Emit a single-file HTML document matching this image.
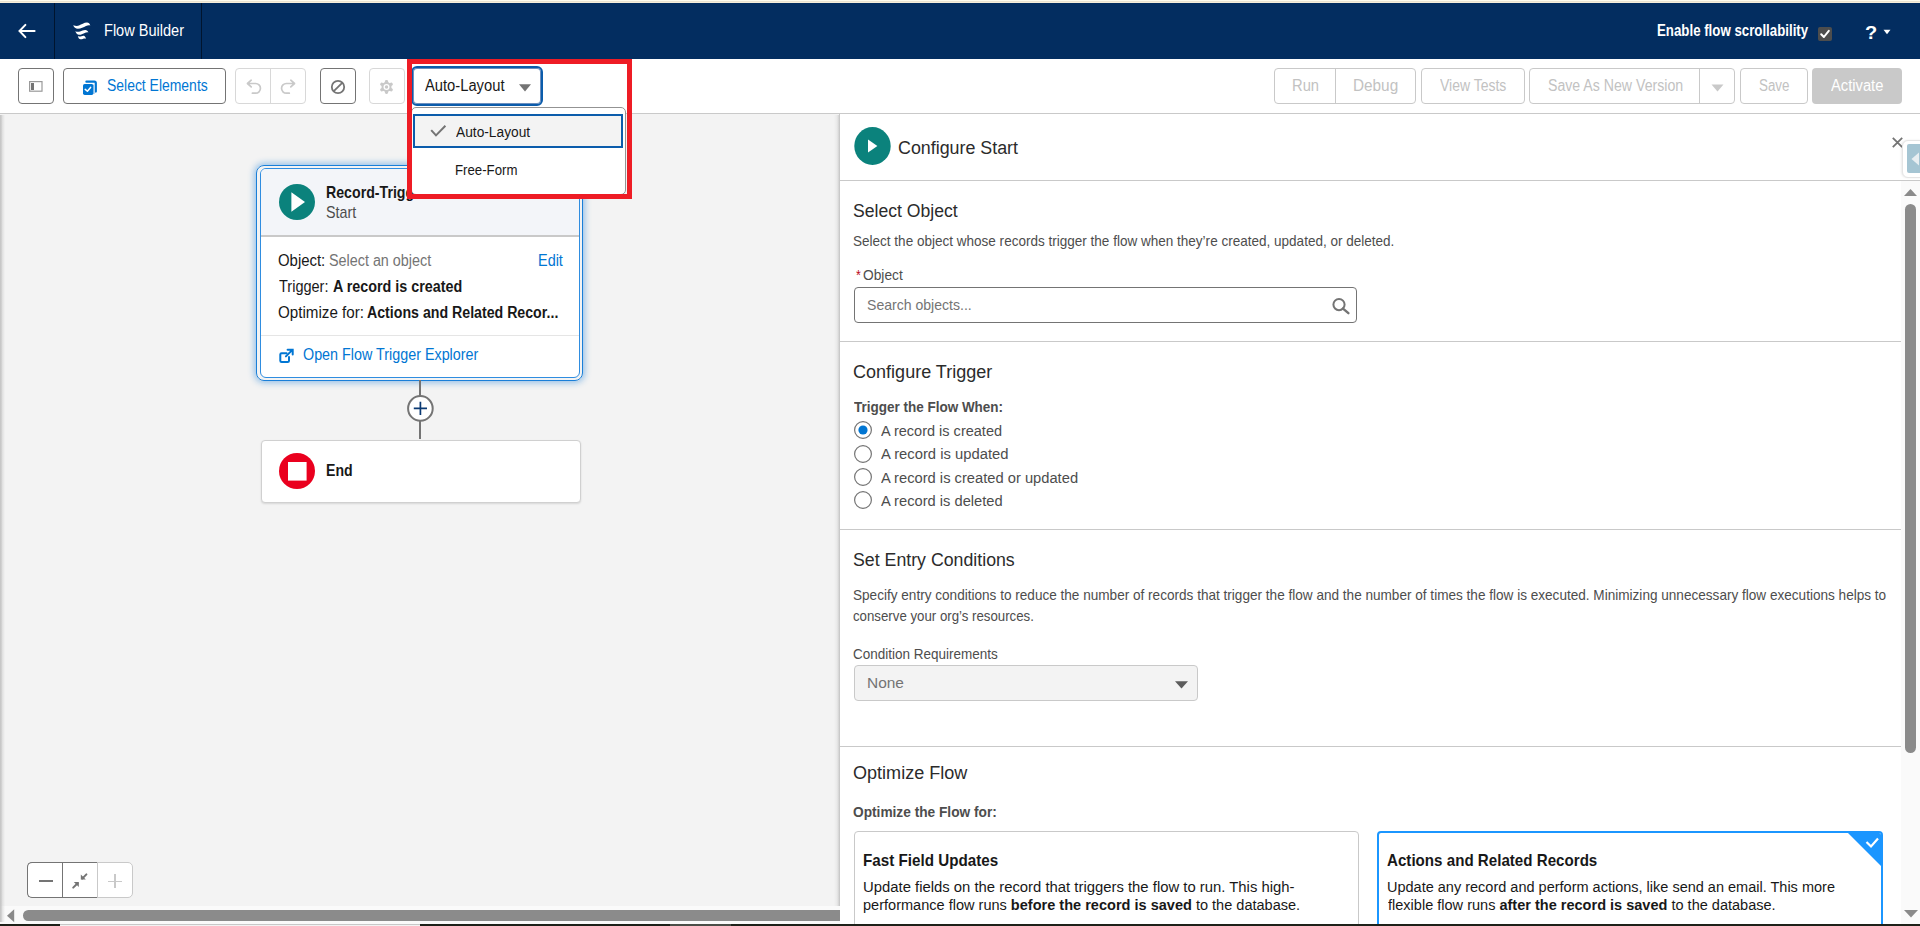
<!DOCTYPE html>
<html><head><meta charset="utf-8">
<style>
*{box-sizing:border-box;margin:0;padding:0}
html,body{width:1920px;height:926px;overflow:hidden;background:#fff;font-family:"Liberation Sans",sans-serif;color:#181818}
.a{position:absolute}
.t{position:absolute;white-space:nowrap;line-height:1;transform-origin:0 0}
.b{font-weight:bold}
svg{position:absolute;overflow:visible}
</style></head><body>

<!-- top strip -->
<div class="a" style="left:0;top:0;width:1920px;height:1px;background:#fefbee"></div><div class="a" style="left:0;top:1px;width:1920px;height:1px;background:#ebe3d1"></div><div class="a" style="left:0;top:2px;width:1920px;height:1px;background:#f7eedb"></div>
<!-- header -->
<div class="a" style="left:0;top:3px;width:1920px;height:56px;background:#032d60"></div>
<div class="a" style="left:54px;top:3px;width:1px;height:56px;background:#00142e"></div>
<div class="a" style="left:201px;top:3px;width:1px;height:56px;background:#00142e"></div>
<svg style="left:18px;top:23px" width="18" height="16" viewBox="0 0 18 16"><path d="M7.4 1.9 L1.5 8 L7.4 14.1 M1.5 8 H16.6" fill="none" stroke="#fff" stroke-width="2" stroke-linecap="round" stroke-linejoin="miter"/></svg>
<svg style="left:70px;top:19px" width="24" height="24" viewBox="0 0 24 24"><g fill="#fff"><path d="M3.2 6.2 C5 6.8 7 7.4 9 6.6 C11.5 5.6 14 3.6 17 3.6 C18.6 3.6 19.8 4.8 20.3 6.4 C18.8 6 17.5 6.3 16 7 C13.5 8.2 11 9.8 7.8 9.8 C5.6 9.8 4 8.2 3.2 6.2Z"/><path d="M5.3 12.2 C6.8 12.8 8.5 13 10 12.4 C12 11.6 13.6 10.8 15.4 10.9 C16.8 11 17.8 12 18.5 13.4 C17.2 13.2 15.8 13.4 14.2 14.2 C12.4 15.1 10.8 15.9 9 15.7 C7.3 15.5 6 14.2 5.3 12.2Z"/><path d="M7.9 16.9 C9 17.5 10.2 17.7 11.4 17.3 C12.5 16.9 13.4 16.6 14.4 17 C15.1 17.4 15.6 18.4 16 19.8 C15 19.4 14 19.5 12.8 19.9 C11.7 20.3 10.6 20.5 9.8 20.1 C8.8 19.6 8.2 18.4 7.9 16.9Z"/></g></svg>
<div class="t" style="left:104.04px;top:23.00px;font-size:16.00px;color:#fff;transform:scaleX(0.9089);">Flow Builder</div>
<div class="t" style="left:1656.74px;top:23.00px;font-size:16.00px;color:#fff;transform:scaleX(0.8293);"><b>Enable flow scrollability</b></div>
<div class="a" style="left:1818px;top:27px;width:14px;height:14px;background:#4d4d4d;border-radius:2px"></div>
<svg style="left:1818px;top:27px" width="14" height="14" viewBox="0 0 14 14"><path d="M3.2 7.2 L5.9 10 L10.8 3.8" fill="none" stroke="#fff" stroke-width="2" stroke-linecap="round" stroke-linejoin="round"/></svg>
<div class="t" style="left:1864.90px;top:24.00px;font-size:18.50px;color:#fff;transform:scaleX(1.0811);"><b>?</b></div>
<svg style="left:1883px;top:29px" width="8" height="6" viewBox="0 0 8 6"><path d="M0.5 0.8 H7.5 L4 5.2Z" fill="#fff"/></svg>

<!-- toolbar -->
<div class="a" style="left:0;top:59px;width:1920px;height:55px;background:#fff;border-bottom:1px solid #c9c9c9"></div>
<!-- panel toggle -->
<div class="a" style="left:18px;top:68px;width:36px;height:36px;border:1px solid #747474;border-radius:4px"></div>
<svg style="left:29px;top:81px" width="14" height="11" viewBox="0 0 14 11"><rect x="0.6" y="0.6" width="12.4" height="9.6" fill="none" stroke="#9a9a9a" stroke-width="1.2"/><rect x="2" y="2" width="3" height="7" fill="#747474"/></svg>
<!-- select elements -->
<div class="a" style="left:63px;top:68px;width:163px;height:36px;border:1px solid #747474;border-radius:4px"></div>
<svg style="left:80px;top:77px" width="20" height="20" viewBox="0 0 20 20"><path d="M6.4 4.7 H14.4 Q15.8 4.7 15.8 6.1 V14.6" fill="none" stroke="#0176d3" stroke-width="2.2" stroke-linecap="round"/><rect x="13.4" y="7.3" width="1.5" height="9.6" fill="#b5d3ef"/><rect x="3" y="6.9" width="10.4" height="11" rx="1.7" fill="#0176d3"/><path d="M5.2 12.4 L7.4 14.3 L10.6 10.4" fill="none" stroke="#fff" stroke-width="1.5" stroke-linecap="round" stroke-linejoin="round"/></svg>
<div class="t" style="left:106.97px;top:78.00px;font-size:16.00px;color:#0176d3;transform:scaleX(0.8712);">Select Elements</div>
<!-- undo/redo -->
<div class="a" style="left:235px;top:68px;width:71px;height:36px;border:1px solid #d8d8d8;border-radius:4px"></div>
<div class="a" style="left:270px;top:69px;width:1px;height:34px;background:#d8d8d8"></div>
<svg style="left:246px;top:79px" width="16" height="16" viewBox="0 0 16 16"><path d="M5.2 1.2 L1.5 4.5 L5.2 7.9 M1.5 4.5 H9.6 A4.85 4.85 0 0 1 9.6 14.2 H6.4" fill="none" stroke="#c9c9c9" stroke-width="1.7" stroke-linecap="round" stroke-linejoin="round"/></svg>
<svg style="left:280px;top:79px" width="16" height="16" viewBox="0 0 16 16"><path d="M10.8 1.2 L14.5 4.5 L10.8 7.9 M14.5 4.5 H6.4 A4.85 4.85 0 0 0 6.4 14.2 H9.3" fill="none" stroke="#c9c9c9" stroke-width="1.7" stroke-linecap="round" stroke-linejoin="round"/></svg>
<!-- cancel -->
<div class="a" style="left:320px;top:68px;width:36px;height:36px;border:1px solid #747474;border-radius:4px"></div>
<svg style="left:330px;top:79.8px" width="16" height="14" viewBox="0 0 16 14"><circle cx="8" cy="7" r="6.2" fill="none" stroke="#747474" stroke-width="1.8"/><path d="M3.8 11.2 L12.2 2.8" stroke="#747474" stroke-width="1.8"/></svg>
<!-- gear -->
<div class="a" style="left:369px;top:68px;width:36px;height:36px;border:1px solid #d8d8d8;border-radius:4px"></div>
<svg style="left:379.3px;top:79.7px" width="15" height="14" viewBox="-7.5 -7 15 14"><g fill="#c9c9c9"><circle r="5"/><rect x="-1.6" y="-7" width="3.2" height="14" rx="1.4"/><rect x="-1.6" y="-7" width="3.2" height="14" rx="1.4" transform="rotate(60)"/><rect x="-1.6" y="-7" width="3.2" height="14" rx="1.4" transform="rotate(120)"/></g><circle r="3" fill="#fff"/><circle r="1.7" fill="#c9c9c9"/></svg>

<!-- right buttons -->
<div class="a" style="left:1274px;top:68px;width:142px;height:36px;border:1px solid #c9c9c9;border-radius:4px"></div>
<div class="a" style="left:1335px;top:69px;width:1px;height:34px;background:#c9c9c9"></div>
<div class="t" style="left:1292.02px;top:78.00px;font-size:16.00px;color:#c2c2c2;transform:scaleX(0.9209);">Run</div>
<div class="t" style="left:1353.17px;top:78.00px;font-size:16.00px;color:#c2c2c2;transform:scaleX(0.9576);">Debug</div>
<div class="a" style="left:1421px;top:68px;width:104px;height:36px;border:1px solid #c9c9c9;border-radius:4px"></div>
<div class="t" style="left:1440.13px;top:78.00px;font-size:16.00px;color:#c2c2c2;transform:scaleX(0.8741);">View Tests</div>
<div class="a" style="left:1529px;top:68px;width:206px;height:36px;border:1px solid #c9c9c9;border-radius:4px"></div>
<div class="a" style="left:1699px;top:69px;width:1px;height:34px;background:#c9c9c9"></div>
<div class="t" style="left:1548.16px;top:78.00px;font-size:16.00px;color:#c2c2c2;transform:scaleX(0.8836);">Save As New Version</div>
<svg style="left:1711px;top:84px" width="13" height="8" viewBox="0 0 13 8"><path d="M0.5 0.5 H12.5 L6.5 7.5Z" fill="#c9c9c9"/></svg>
<div class="a" style="left:1740px;top:68px;width:68px;height:36px;border:1px solid #c9c9c9;border-radius:4px"></div>
<div class="t" style="left:1758.60px;top:78.00px;font-size:16.00px;color:#c2c2c2;transform:scaleX(0.8362);">Save</div>
<div class="a" style="left:1812px;top:68px;width:90px;height:36px;background:#c9c9c9;border-radius:4px"></div>
<div class="t" style="left:1831.23px;top:78.00px;font-size:16.00px;color:#fff;transform:scaleX(0.9201);">Activate</div>

<!-- canvas -->
<div class="a" style="left:0;top:114px;width:840px;height:812px;background:#f3f3f3"></div>

<!-- right panel -->
<div class="a" style="left:834px;top:115px;width:5px;height:809px;background:linear-gradient(90deg,#f3f3f3 0,#e9e9e9 3px,#d2d2d2 5px)"></div>
<div class="a" style="left:839px;top:114px;width:1081px;height:812px;background:#fff;border-left:1px solid #c9c9c9"></div>
<svg style="left:853.5px;top:127.2px" width="37" height="38" viewBox="0 0 37 38"><ellipse cx="18.5" cy="19" rx="18.2" ry="18.9" fill="#0b827c"/><path d="M14 12.4 L23.4 19 L14 25.6Z" fill="#fff"/></svg>
<div class="t" style="left:898.01px;top:139.00px;font-size:18.00px;color:#2b2b2b;transform:scaleX(0.9912);">Configure Start</div>
<svg style="left:1892px;top:137px" width="11" height="11" viewBox="0 0 11 11"><path d="M0.8 0.8 L10.2 10.2 M10.2 0.8 L0.8 10.2" stroke="#747474" stroke-width="1.8"/></svg>
<div class="a" style="left:1902px;top:139.5px;width:24px;height:38px;background:#fff;border:1px solid #e5e5e5;border-radius:6px;box-shadow:-1px 0 2px rgba(0,0,0,0.08)"></div>
<div class="a" style="left:1907px;top:144px;width:16px;height:29px;background:#a5c5d3;border-radius:2px"></div>
<svg style="left:1911px;top:152px" width="9" height="14" viewBox="0 0 9 14"><path d="M8 0.5 V13.5 L0.5 7Z" fill="#e8eef1"/></svg>
<div class="a" style="left:840px;top:180px;width:1080px;height:1px;background:#c9c9c9"></div>

<!-- scrollbar v -->
<div class="a" style="left:1901px;top:181px;width:19px;height:743px;background:#fafafa"></div>
<svg style="left:1904px;top:189px" width="13" height="7" viewBox="0 0 13 7"><path d="M0 7 H13 L6.5 0Z" fill="#8a8a8a"/></svg>
<div class="a" style="left:1905px;top:204px;width:11px;height:549px;background:#8b8b8b;border-radius:5.5px"></div>
<svg style="left:1903.5px;top:910px" width="14" height="8" viewBox="0 0 14 8"><path d="M0 0 H14 L7 7.5Z" fill="#8a8a8a"/></svg>

<!-- Select Object -->
<div class="t" style="left:853.01px;top:202.00px;font-size:18.00px;color:#2b2b2b;transform:scaleX(0.9782);">Select Object</div>
<div class="t" style="left:853.09px;top:234.00px;font-size:14.20px;color:#4d4d4d;transform:scaleX(0.9534);">Select the object whose records trigger the flow when they’re created, updated, or deleted.</div>
<div class="t" style="left:856.41px;top:268.00px;font-size:14.20px;color:#ba0517;transform:scaleX(0.8728);">*</div>
<div class="t" style="left:863.18px;top:268.00px;font-size:14.20px;color:#4d4d4d;transform:scaleX(0.9688);">Object</div>
<div class="a" style="left:854px;top:287px;width:503px;height:36px;border:1px solid #747474;border-radius:4px"></div>
<div class="t" style="left:867.37px;top:297.00px;font-size:15.00px;color:#747474;transform:scaleX(0.9375);">Search objects...</div>
<svg style="left:1332px;top:298px" width="18" height="16" viewBox="0 0 18 16"><circle cx="7" cy="6.6" r="5.6" fill="none" stroke="#747474" stroke-width="2"/><path d="M11 10.6 L16.4 15.2" stroke="#747474" stroke-width="2.4" stroke-linecap="round"/></svg>
<div class="a" style="left:840px;top:341px;width:1061px;height:1px;background:#c9c9c9"></div>

<!-- Configure Trigger -->
<div class="t" style="left:853.10px;top:363.00px;font-size:18.00px;color:#2b2b2b;">Configure Trigger</div>
<div class="t" style="left:853.87px;top:400.00px;font-size:14.40px;color:#4d4d4d;transform:scaleX(0.9371);"><b>Trigger the Flow When:</b></div>
<svg style="left:854px;top:421px" width="18" height="18" viewBox="0 0 18 18"><circle cx="9" cy="9" r="8.4" fill="#fff" stroke="#747474" stroke-width="1.2"/><circle cx="9" cy="9" r="4.6" fill="#0176d3"/></svg>
<div class="t" style="left:880.93px;top:423.00px;font-size:15.50px;color:#4d4d4d;transform:scaleX(0.9367);">A record is created</div>
<svg style="left:854px;top:444.6px" width="18" height="18" viewBox="0 0 18 18"><circle cx="9" cy="9" r="8.4" fill="#fff" stroke="#747474" stroke-width="1.2"/></svg>
<div class="t" style="left:880.73px;top:446.00px;font-size:15.50px;color:#4d4d4d;transform:scaleX(0.9543);">A record is updated</div>
<svg style="left:854px;top:467.6px" width="18" height="18" viewBox="0 0 18 18"><circle cx="9" cy="9" r="8.4" fill="#fff" stroke="#747474" stroke-width="1.2"/></svg>
<div class="t" style="left:880.93px;top:470.00px;font-size:15.50px;color:#4d4d4d;transform:scaleX(0.9490);">A record is created or updated</div>
<svg style="left:854px;top:490.8px" width="18" height="18" viewBox="0 0 18 18"><circle cx="9" cy="9" r="8.4" fill="#fff" stroke="#747474" stroke-width="1.2"/></svg>
<div class="t" style="left:880.73px;top:493.00px;font-size:15.50px;color:#4d4d4d;transform:scaleX(0.9477);">A record is deleted</div>
<div class="a" style="left:840px;top:529px;width:1061px;height:1px;background:#c9c9c9"></div>

<!-- Set Entry Conditions -->
<div class="t" style="left:852.80px;top:551.00px;font-size:18.00px;color:#2b2b2b;transform:scaleX(0.9857);">Set Entry Conditions</div>
<div class="t" style="left:852.69px;top:588.00px;font-size:14.20px;color:#4d4d4d;transform:scaleX(0.9570);">Specify entry conditions to reduce the number of records that trigger the flow and the number of times the flow is executed. Minimizing unnecessary flow executions helps to</div>
<div class="t" style="left:853.07px;top:609.00px;font-size:14.20px;color:#4d4d4d;transform:scaleX(0.9339);">conserve your org’s resources.</div>
<div class="t" style="left:852.93px;top:647.00px;font-size:14.20px;color:#4d4d4d;transform:scaleX(0.9507);">Condition Requirements</div>
<div class="a" style="left:854px;top:665px;width:344px;height:36px;background:#f3f3f3;border:1px solid #c9c9c9;border-radius:4px"></div>
<div class="t" style="left:866.76px;top:675.00px;font-size:15.00px;color:#747474;transform:scaleX(1.0302);">None</div>
<svg style="left:1174.5px;top:681px" width="13" height="8" viewBox="0 0 13 8"><path d="M0 0.3 H13 L6.5 7.6Z" fill="#5c5c5c"/></svg>
<div class="a" style="left:840px;top:746px;width:1061px;height:1px;background:#c9c9c9"></div>

<!-- Optimize Flow -->
<div class="t" style="left:852.69px;top:764.00px;font-size:18.00px;color:#2b2b2b;transform:scaleX(1.0034);">Optimize Flow</div>
<div class="t" style="left:852.95px;top:805.00px;font-size:14.40px;color:#4d4d4d;transform:scaleX(0.9518);"><b>Optimize the Flow for:</b></div>
<div class="a" style="left:854px;top:831px;width:505px;height:120px;border:1px solid #c9c9c9;border-radius:4px"></div>
<div class="t" style="left:862.91px;top:853.00px;font-size:15.90px;color:#181818;transform:scaleX(0.9565);"><b>Fast Field Updates</b></div>
<div class="t" style="left:862.79px;top:879.00px;font-size:15.50px;color:#181818;transform:scaleX(0.9581);">Update fields on the record that triggers the flow to run. This high-</div>
<div class="t" style="left:862.96px;top:897.00px;font-size:15.50px;color:#181818;transform:scaleX(0.9379);">performance flow runs <b>before the record is saved</b> to the database.</div>
<div class="a" style="left:1377px;top:831px;width:506px;height:120px;border:2px solid #1b96ff;border-radius:4px;overflow:hidden">
  <svg style="right:-1px;top:-1px" width="35" height="35" viewBox="0 0 35 35"><path d="M0 0 H35 V35Z" fill="#1b96ff"/><path d="M19.5 10 L24 14.5 L31 6.5" fill="none" stroke="#fff" stroke-width="2.2"/></svg>
</div>
<div class="t" style="left:1387.42px;top:853.00px;font-size:15.90px;color:#181818;transform:scaleX(0.9526);"><b>Actions and Related Records</b></div>
<div class="t" style="left:1386.71px;top:879.00px;font-size:15.50px;color:#181818;transform:scaleX(0.9357);">Update any record and perform actions, like send an email. This more</div>
<div class="t" style="left:1387.58px;top:897.00px;font-size:15.50px;color:#181818;transform:scaleX(0.9373);">flexible flow runs <b>after the record is saved</b> to the database.</div>
<div class="a" style="left:1901px;top:181px;width:19px;height:743px;background:transparent"></div>

<!-- START CARD -->
<div class="a" style="left:256.3px;top:164.6px;width:327px;height:216.2px;border:1.7px solid #1a7fd8;border-radius:8px;box-shadow:0 0 6px 2px rgba(26,127,216,0.42)"></div>
<div class="a" style="left:260px;top:168px;width:320px;height:210px;border:1.3px solid #2f8de0;border-radius:6px;background:#fff;overflow:hidden">
  <div class="a" style="left:0;top:0;width:320px;height:68px;background:#f3f5f9;border-bottom:2px solid #c9c9c9"></div>
  <div class="a" style="left:0;top:166px;width:320px;height:1px;background:#e5e5e5"></div>
</div>
<svg style="left:278.5px;top:183.5px" width="36" height="36" viewBox="0 0 36 36"><circle cx="18" cy="18" r="18" fill="#0b827c"/><path d="M12.4 8.2 L26 18 L12.4 27.8Z" fill="#fff"/></svg>
<div class="t" style="left:325.88px;top:185.00px;font-size:15.70px;color:#181818;transform:scaleX(0.9030);"><b>Record-Triggered Flow</b></div>
<div class="t" style="left:325.86px;top:205.00px;font-size:15.70px;color:#4d4d4d;transform:scaleX(0.9090);">Start</div>
<div class="t" style="left:278.23px;top:253.00px;font-size:16.00px;color:#181818;transform:scaleX(0.9323);">Object:</div>
<div class="t" style="left:328.55px;top:253.00px;font-size:16.00px;color:#747474;transform:scaleX(0.8970);">Select an object</div>
<div class="t" style="left:538.35px;top:253.00px;font-size:16.00px;color:#0176d3;transform:scaleX(0.9021);">Edit</div>
<div class="t" style="left:278.91px;top:279.00px;font-size:16.00px;color:#181818;transform:scaleX(0.9067);">Trigger:</div>
<div class="t" style="left:332.84px;top:279.00px;font-size:16.00px;color:#181818;transform:scaleX(0.8952);"><b>A record is created</b></div>
<div class="t" style="left:278.22px;top:305.00px;font-size:16.00px;color:#181818;transform:scaleX(0.9482);">Optimize for:</div>
<div class="t" style="left:366.85px;top:305.00px;font-size:16.00px;color:#181818;transform:scaleX(0.8855);"><b>Actions and Related Recor...</b></div>
<svg style="left:279px;top:348px" width="16" height="16" viewBox="0 0 16 16"><path d="M7.6 5.3 H2.6 Q1.3 5.3 1.3 6.6 V12.7 Q1.3 14 2.6 14 H8.7 Q10 14 10 12.7 V9" fill="none" stroke="#0176d3" stroke-width="2" stroke-linecap="round"/><path d="M6.9 8.4 L13.2 2.1 M8.6 1.7 H13.7 V6.6" fill="none" stroke="#0176d3" stroke-width="2" stroke-linecap="round"/></svg>
<div class="t" style="left:303.35px;top:347.00px;font-size:16.00px;color:#0176d3;transform:scaleX(0.8960);">Open Flow Trigger Explorer</div>

<!-- connector -->
<div class="a" style="left:419px;top:380px;width:2px;height:59px;background:#747474"></div>
<svg style="left:407px;top:395px" width="27" height="27" viewBox="0 0 27 27"><circle cx="13.4" cy="13.4" r="12.3" fill="#fff" stroke="#747474" stroke-width="2"/><path d="M6.8 13.4 H20 M13.4 6.8 V20" stroke="#0b3a73" stroke-width="1.7"/></svg>

<!-- END CARD -->
<div class="a" style="left:260.5px;top:439.5px;width:320px;height:63.8px;background:#fff;border:1px solid #d0d0d0;border-radius:4px;box-shadow:0 1px 2px rgba(0,0,0,0.12)"></div>
<svg style="left:278.5px;top:452.8px" width="36" height="36" viewBox="0 0 36 36"><circle cx="18" cy="18" r="18" fill="#ea001e"/><rect x="9" y="9" width="18.6" height="18.6" fill="#fff"/></svg>
<div class="t" style="left:325.58px;top:463.00px;font-size:15.60px;color:#181818;transform:scaleX(0.9033);"><b>End</b></div>

<!-- zoom controls -->
<div class="a" style="left:27px;top:862px;width:106px;height:36px;background:#fff;border:1px solid #c9c9c9;border-radius:5px"></div>
<div class="a" style="left:27px;top:862px;width:71px;height:36px;border:1px solid #747474;border-right:none;border-radius:5px 0 0 5px"></div>
<div class="a" style="left:62px;top:862px;width:1px;height:36px;background:#747474"></div>
<div class="a" style="left:97px;top:862px;width:1px;height:36px;background:#c9c9c9"></div>
<div class="a" style="left:38.5px;top:880px;width:14px;height:2px;background:#747474"></div>
<svg style="left:72px;top:873px" width="16" height="16" viewBox="0 0 16 16"><g fill="none" stroke="#747474" stroke-width="2" stroke-linecap="round"><path d="M1.2 14.6 L5.6 10.2"/><path d="M14.4 1.4 L10.2 5.6"/></g><path d="M1.6 9.2 H6.6 V14.2Z" fill="#747474" transform="translate(0.2,-0.2)"/><path d="M7.2 1.8 V6.8 H12.2Z" fill="#747474" transform="translate(1.6,-0.4)"/></svg>
<div class="a" style="left:108px;top:880.5px;width:14px;height:1.6px;background:#c9c9c9"></div>
<div class="a" style="left:114.2px;top:874px;width:1.6px;height:14px;background:#c9c9c9"></div>

<!-- horizontal scrollbar -->
<div class="a" style="left:0;top:906px;width:840px;height:18px;background:#fafafa"></div>
<svg style="left:6.8px;top:908.6px" width="8" height="14" viewBox="0 0 8 14"><path d="M7.2 0.2 V13.2 L0 6.7Z" fill="#8a8a8a"/></svg>
<div class="a" style="left:23px;top:910px;width:816.6px;height:10.5px;background:#8b8b8b;border-radius:5.25px 0 0 5.25px"></div>
<div class="a" style="left:0;top:115px;width:5px;height:807px;background:linear-gradient(90deg,rgba(190,190,190,0.85) 0,rgba(190,190,190,0.8) 1px,rgba(190,190,190,0.35) 2.5px,rgba(190,190,190,0) 5px)"></div>

<!-- COMBOBOX + DROPDOWN -->
<div class="a" style="left:411px;top:66px;width:132px;height:40px;background:#fff;border:2px solid #0b5cab;border-radius:6px;box-shadow:inset 0 0 0 1px #6b8fbf"></div>
<div class="t" style="left:424.63px;top:78.00px;font-size:16.00px;color:#181818;transform:scaleX(0.9212);">Auto-Layout</div>
<svg style="left:519px;top:84px" width="12" height="8" viewBox="0 0 12 8"><path d="M0 0.3 H12 L6 7.5Z" fill="#747474"/></svg>
<div class="a" style="left:411px;top:107px;width:215px;height:88px;background:#fff;border:1px solid #939393;border-radius:5px"></div>
<div class="a" style="left:413.2px;top:113.9px;width:209.4px;height:33.8px;background:#f3f3f3;border:2.6px solid #0b5cab"></div>
<svg style="left:430px;top:124px" width="17" height="14" viewBox="0 0 17 14"><path d="M1.2 6.1 L6 11.4 L15.4 1.8" fill="none" stroke="#747474" stroke-width="2"/></svg>
<div class="t" style="left:455.93px;top:125.00px;font-size:14.70px;color:#181818;transform:scaleX(0.9357);">Auto-Layout</div>
<div class="t" style="left:455.34px;top:163.00px;font-size:14.70px;color:#181818;transform:scaleX(0.9011);">Free-Form</div>
<div class="a" style="left:407px;top:59px;width:225px;height:140px;border:5px solid #ee1c25"></div>

<!-- bottom strip -->
<div class="a" style="left:0;top:924px;width:1920px;height:2px;background:#1e2119"></div>
<div class="a" style="left:60px;top:924px;width:360px;height:1px;background:#c8c8c8"></div>
<div class="a" style="left:60px;top:925px;width:360px;height:1px;background:#f2f2f2"></div>
<div class="a" style="left:670px;top:924px;width:61px;height:2px;background:#4b4e47"></div>

</body></html>
